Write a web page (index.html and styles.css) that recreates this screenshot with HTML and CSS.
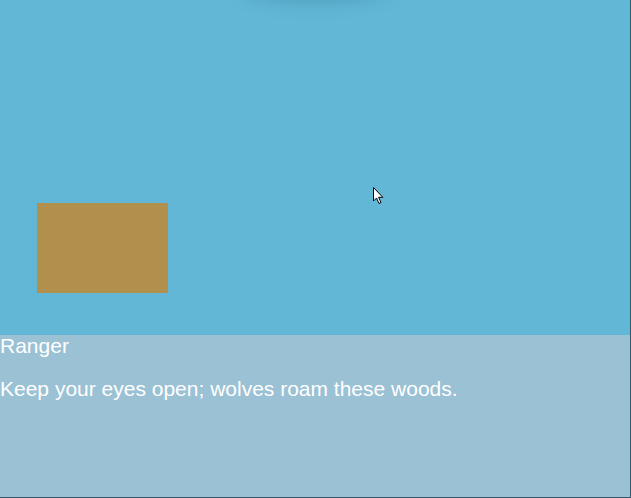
FILE: index.html
```
<!DOCTYPE html>
<html>
<head>
<meta charset="utf-8">
<link rel="stylesheet" href="styles.css">
</head>
<body>
<div class="stage">
  <div class="scene">
    <div class="top-shadow"></div>
    <div class="crate"></div>
    <svg class="cursor" width="12" height="18" viewBox="0 0 12 18">
      <path d="M0.5 0.5 L0.5 14 L3.5 11 L6 16.5 L8 15.5 L5.6 10.3 L9.8 10.3 Z" fill="#fff" stroke="#000" stroke-width="1"/>
    </svg>
  </div>
  <div class="dialog">
    <div class="speaker">Ranger</div>
    <p class="line">Keep your eyes open; wolves roam these woods.</p>
  </div>
</div>
</body>
</html>
```
FILE: styles.css
```
html, body {
  margin: 0;
  padding: 0;
  background: #35596b;
  overflow: hidden;
}
.stage {
  width: 630px;
  height: 497px;
  display: flex;
  flex-direction: column;
  font-family: "Liberation Sans", Arial, sans-serif;
  color: #fff;
}
.scene {
  position: relative;
  height: 335px;
  background: #62b7d7;
  overflow: hidden;
}
.top-shadow {
  position: absolute;
  left: 240px;
  top: -30px;
  width: 150px;
  height: 30px;
  border-radius: 50%;
  box-shadow: 0 0 18px 2px rgba(40, 90, 120, 0.25);
}
.crate {
  position: absolute;
  left: 37px;
  top: 203px;
  width: 131px;
  height: 90px;
  background: #b1904e;
}
.cursor {
  position: absolute;
  left: 373px;
  top: 187px;
}
.dialog {
  flex: 1;
  background: #9bc1d5;
  font-size: 21px;
}
.speaker {
  line-height: 22px;
}
.line {
  margin: 21px 0 0;
  line-height: 22px;
}
```
